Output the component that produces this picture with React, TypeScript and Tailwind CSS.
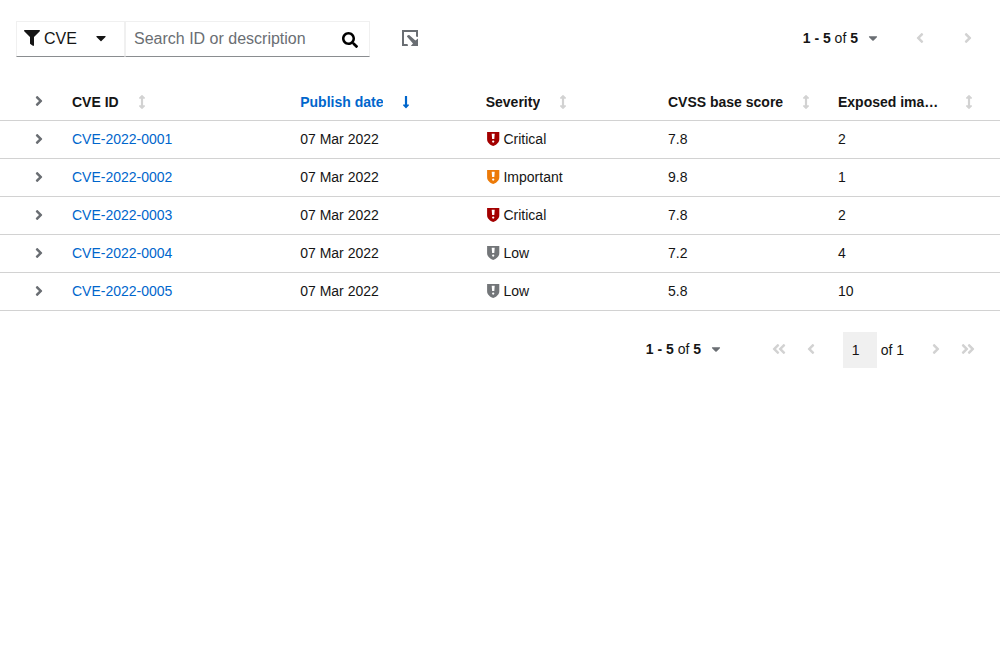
import React from "react";
import {
  FaFilter,
  FaCaretDown,
  FaSearch,
  FaAngleRight,
  FaAngleLeft,
  FaAngleDoubleLeft,
  FaAngleDoubleRight,
  FaArrowsAltV,
  FaLongArrowAltDown,
} from "react-icons/fa";

type Severity = "Critical" | "Important" | "Low";

interface Cve {
  id: string;
  date: string;
  severity: Severity;
  score: string;
  images: number;
}

const cves: Cve[] = [
  { id: "CVE-2022-0001", date: "07 Mar 2022", severity: "Critical", score: "7.8", images: 2 },
  { id: "CVE-2022-0002", date: "07 Mar 2022", severity: "Important", score: "9.8", images: 1 },
  { id: "CVE-2022-0003", date: "07 Mar 2022", severity: "Critical", score: "7.8", images: 2 },
  { id: "CVE-2022-0004", date: "07 Mar 2022", severity: "Low", score: "7.2", images: 4 },
  { id: "CVE-2022-0005", date: "07 Mar 2022", severity: "Low", score: "5.8", images: 10 },
];

const severityColor: Record<Severity, string> = {
  Critical: "text-[#a30000]",
  Important: "text-[#ec7a08]",
  Low: "text-[#737679]",
};

const columns = "grid grid-cols-[72px_228.2px_185.5px_182.3px_170px_162px] items-center";

function ShieldIcon({ className }: { className: string }) {
  return (
    <svg viewBox="0 0 14 14" className={`size-3.5 ${className}`} fill="currentColor">
      <path
        fillRule="evenodd"
        d="M1.100 0h12.200v7.200c0 3.200-2.700 5.500-6.100 6.800C3.800 12.700 1.100 10.400 1.100 7.200zM5.700 1.700l.4 5.400h2.200l.4-5.400zM7.200 8.400a1.150 1.150 0 1 0 0 2.300a1.150 1.150 0 1 0 0-2.300z"
      />
    </svg>
  );
}

function ExportIcon() {
  return (
    <svg viewBox="0 0 16 16" className="size-4 text-[#6a6e73]" fill="currentColor">
      <path d="M0 0h16v7l-2-.6V2H2v12h3.500l.5 2H0z" />
      <path d="M4.900 6.500Q5.600 5 7.200 5.100L13.400 10.500 16 8.600V16H8.800l2.200-2.600z" />
    </svg>
  );
}

function SortHeader({ label, active, className = "" }: { label: string; active?: boolean; className?: string }) {
  return (
    <button className={`flex items-center pt-px text-left font-bold ${active ? "text-[#06c]" : ""} ${className}`}>
      <span className="truncate">{label}</span>
      {active ? (
        <FaLongArrowAltDown className="ml-4 shrink-0 text-[#06c]" />
      ) : (
        <FaArrowsAltV className="ml-4 shrink-0 text-[#d2d2d2]" />
      )}
    </button>
  );
}

function PageRange() {
  return (
    <button className="flex items-center">
      <span>
        <b>1 - 5</b> of <b>5</b>
      </span>
      <FaCaretDown className="ml-2 text-[#6a6e73]" />
    </button>
  );
}

export default function App() {
  return (
    <main className="min-h-screen bg-white text-sm leading-[21px] text-[#151515] [font-family:'Liberation_Sans',Arial,sans-serif]">
      <header className="flex h-[83px] items-start pt-[21px]">
        <div className="ml-4 flex h-9 text-base leading-6">
          <button className="flex w-[109px] items-center border border-[#f0f0f0] border-b-[#8a8d90] pl-[7px]">
            <FaFilter className="mb-0.5" />
            <span className="ml-1">CVE</span>
            <FaCaretDown className="mb-0.5 ml-4" />
          </button>
          <div className="flex w-[245px] items-center border border-[#f0f0f0] border-b-[#8a8d90] pl-2">
            <input
              className="w-[208px] outline-none placeholder:text-[#6a6e73]"
              placeholder="Search ID or description"
            />
            <FaSearch className="mt-px shrink-0 text-black" />
          </div>
        </div>
        <button className="mt-[9px] ml-8" aria-label="Export">
          <ExportIcon />
        </button>
        <div className="mr-6 ml-auto flex h-[34px] items-center text-[#d2d2d2]">
          <div className="mr-8 text-[#151515]">
            <PageRange />
          </div>
          <FaAngleLeft className="mr-8 size-4" />
          <FaAngleRight className="size-4" />
        </div>
      </header>

      <section>
        <div className={`${columns} h-[38px] border-b border-[#d2d2d2]`}>
          <FaAngleRight className="mb-px ml-[31px] size-4 text-[#6a6e73]" />
          <SortHeader label="CVE ID" />
          <SortHeader label="Publish date" active />
          <SortHeader label="Severity" />
          <SortHeader label="CVSS base score" />
          <SortHeader label="Exposed images" className="w-[138px]" />
        </div>
        {cves.map((cve) => (
          <div key={cve.id} className={`${columns} h-[38px] border-b border-[#d2d2d2]`}>
            <FaAngleRight className="mb-px ml-[31px] size-4 text-[#6a6e73]" />
            <a href="#" className="text-[#06c]">{cve.id}</a>
            <span>{cve.date}</span>
            <span className="flex items-center gap-[3.800px]">
              <ShieldIcon className={`mb-px ${severityColor[cve.severity]}`} />
              {cve.severity}
            </span>
            <span>{cve.score}</span>
            <span>{cve.images}</span>
          </div>
        ))}
      </section>

      <footer className="mt-[21px] mr-6 flex h-9 items-center justify-end text-[#d2d2d2]">
        <div className="mr-[47.500px] mb-0.5 text-[#151515]">
          <PageRange />
        </div>
        <FaAngleDoubleLeft className="mr-4 mb-0.5 size-4" />
        <FaAngleLeft className="mr-6 mb-0.5 size-4" />
        <input
          className="h-9 w-[34px] bg-[#f0f0f0] pl-[9px] text-[#151515] outline-none"
          defaultValue="1"
          aria-label="Page"
        />
        <span className="mr-6 ml-1 text-[#151515]">of 1</span>
        <FaAngleRight className="mr-4 mb-0.5 size-4" />
        <FaAngleDoubleRight className="mb-0.5 size-4" />
      </footer>
    </main>
  );
}
